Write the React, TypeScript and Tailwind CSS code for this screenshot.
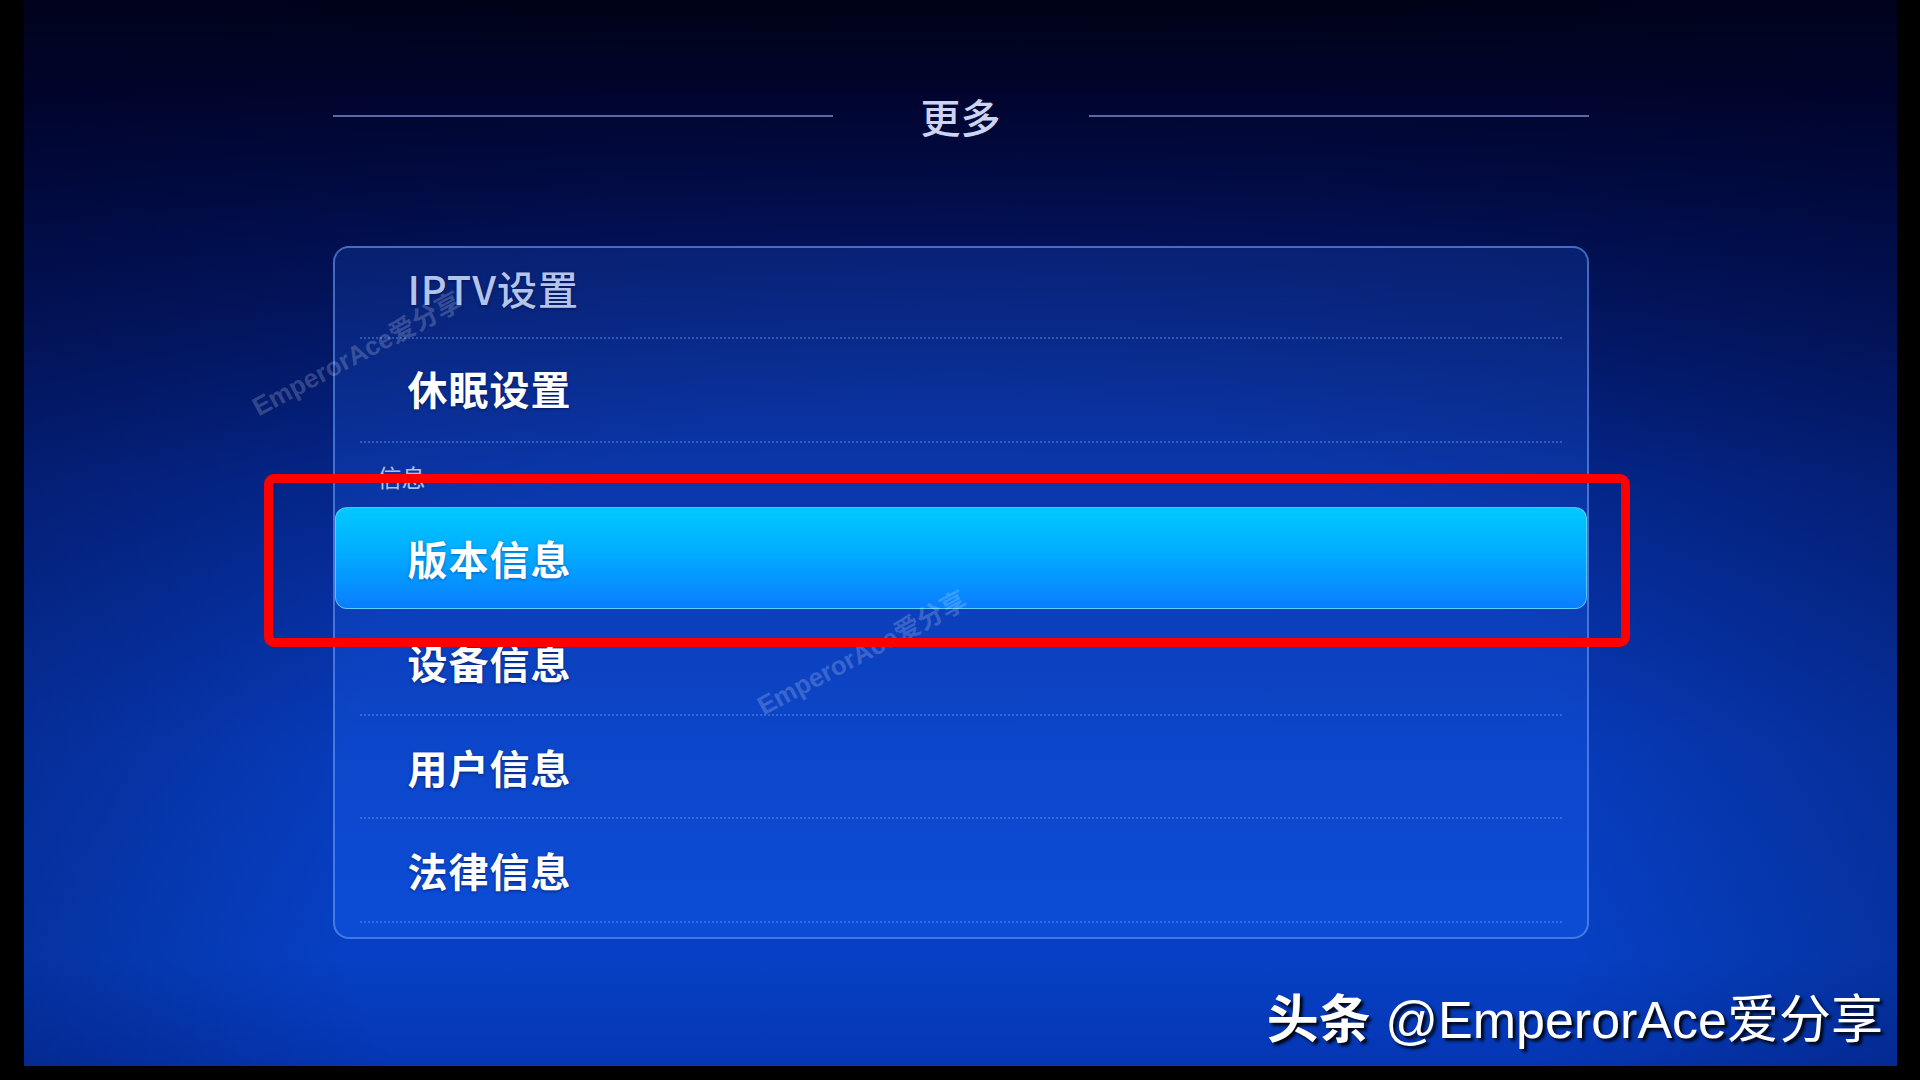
import React from 'react';

const Sep: React.FC = () => (
  <div className="mx-[25px] h-[2px] border-t-2 border-dotted border-[#6f9cf0]/40" />
);

const Row: React.FC<{ label: string; h: string; dim?: boolean }> = ({ label, h, dim }) => (
  <div
    className={`${h} flex items-center pl-[73px] text-[40px] font-bold tracking-[1px] [text-shadow:0_1px_3px_rgba(0,10,60,0.6)] ${
      dim ? 'text-[#b3c4ea] font-medium' : 'text-white'
    }`}
  >
    {label}
  </div>
);

const Watermark: React.FC<{ left: string; top: string }> = ({ left, top }) => (
  <div
    className={`absolute ${left} ${top} w-[250px] h-[32px] -rotate-[28deg] text-center text-[26px] leading-[32px] font-bold text-white/20 font-['Liberation_Sans','Noto_Sans_CJK_SC',sans-serif]`}
  >
    EmperorAce爱分享
  </div>
);

export default function App() {
  return (
    <div className="relative w-[1920px] h-[1080px] overflow-hidden bg-black font-['Noto_Sans_CJK_SC',sans-serif]">
      {/* screen */}
      <div className="ml-[24px] w-[1873px] h-[1066px] flex flex-col items-center bg-[radial-gradient(ellipse_75%_95%_at_50%_80%,transparent_45%,rgba(0,4,40,0.55)_100%),linear-gradient(180deg,#00010a_0%,#010532_9%,#02135e_22%,#052a96_45%,#073ab8_70%,#0640c4_90%,#0536b4_100%)]">
        {/* title */}
        <div className="w-[1256px] mt-[92px] h-[48px] flex items-center">
          <div className="flex-1 h-[2px] bg-[#5c67a6]" />
          <span className="mx-[88px] text-[40px] leading-[48px] font-medium text-[#cdd3f2]">更多</span>
          <div className="flex-1 h-[2px] bg-[#5c67a6]" />
        </div>

        {/* list panel */}
        <div className="mt-[106px] w-[1256px] h-[693px] rounded-[16px] border-2 border-[#6a9af2]/60 flex flex-col bg-[linear-gradient(180deg,rgba(30,90,220,0.22)_0%,rgba(25,105,255,0.32)_100%)]">
          <Row label="IPTV设置" h="h-[89px] pb-[10px]" dim />
          <Sep />
          <Row label="休眠设置" h="h-[102px] pb-[4px]" />
          <Sep />
          <div className="h-[64px] pt-[20px] pl-[43px] text-[24px] leading-[28px] text-white/70">信息</div>
          <div className="h-[102px] rounded-[12px] border border-[#7fd6ff]/70 flex items-center pl-[72px] text-[40px] font-bold tracking-[1px] text-white [text-shadow:0_1px_3px_rgba(0,40,120,0.5)] bg-[linear-gradient(180deg,#00c9ff_0%,#02acff_45%,#0a7dff_100%)]">
            版本信息
          </div>
          <Row label="设备信息" h="h-[105px]" />
          <Sep />
          <Row label="用户信息" h="h-[101px]" />
          <Sep />
          <Row label="法律信息" h="h-[102px]" />
          <Sep />
        </div>
      </div>

      {/* faint diagonal watermarks */}
      <Watermark left="left-[232px]" top="top-[338px]" />
      <Watermark left="left-[737px]" top="top-[637px]" />

      {/* red annotation box */}
      <div className="absolute left-[264px] top-[474px] w-[1366px] h-[173px] rounded-[10px] border-[9px] border-[#ff0000]" />

      {/* source watermark */}
      <div className="absolute right-[37px] top-[990px] text-[52px] leading-none text-white whitespace-nowrap [text-shadow:3px_3px_3px_rgba(0,0,0,0.9)]">
        <span className="font-bold font-['Noto_Sans_CJK_SC',sans-serif]">头条</span>
        <span className="font-['Liberation_Sans','Noto_Sans_CJK_SC',sans-serif]"> @EmperorAce爱分享</span>
      </div>
    </div>
  );
}
